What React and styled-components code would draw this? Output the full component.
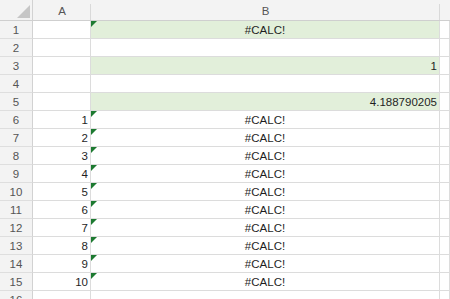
import React from "react";
import styled, { createGlobalStyle } from "styled-components";

const Global = createGlobalStyle`
  html, body {
    margin: 0;
    padding: 0;
    background: #ffffff;
    overflow: hidden;
  }
  body {
    font-family: "Liberation Sans", Arial, sans-serif;
  }
`;

const rows = [
  { b: "#CALC!", bAlign: "center", fill: true, flag: true },
  {},
  { b: "1", bAlign: "right", fill: true },
  {},
  { b: "4.188790205", bAlign: "right", fill: true },
  ...Array.from({ length: 10 }, (_, i) => ({
    a: String(i + 1),
    b: "#CALC!",
    bAlign: "center",
    flag: true,
  })),
  {},
];

const App = () => {
  return (
    <>
      <Global />
      <Sheet>
        <Corner />
        <ColHeader>A</ColHeader>
        <ColHeader>B</ColHeader>
        <ColHeader last />
        {rows.map((row, i) => (
          <React.Fragment key={i}>
            <RowHeader>{i + 1}</RowHeader>
            <Cell align="right">{row.a}</Cell>
            <Cell align={row.bAlign} fill={row.fill ? 1 : 0} flag={row.flag ? 1 : 0}>
              {row.b}
            </Cell>
            <Cell />
          </React.Fragment>
        ))}
      </Sheet>
    </>
  );
};

export default App;

const Sheet = styled.div`
  display: grid;
  grid-template-columns: 33px 58px 349px 1fr;
  grid-template-rows: 21px;
  grid-auto-rows: 18px;
  width: 450px;
  height: 299px;
  overflow: hidden;
`;

const Corner = styled.div`
  position: relative;
  background: #f3f3f3;
  border-right: 1px solid #d2d2d2;
  border-bottom: 1px solid #cfcfcf;
  &::after {
    content: "";
    position: absolute;
    right: 2px;
    bottom: 2px;
    width: 0;
    height: 0;
    border-left: 13px solid transparent;
    border-bottom: 13px solid #c6c6c6;
  }
`;

const ColHeader = styled.div`
  position: relative;
  background: #f3f3f3;
  border-bottom: 1px solid #cfcfcf;
  color: #555555;
  font-size: 11.5px;
  display: flex;
  align-items: center;
  justify-content: center;
  padding-top: 1px;
  &::after {
    content: "";
    display: ${(p) => (p.last ? "none" : "block")};
    position: absolute;
    right: 0;
    top: 4px;
    bottom: 0;
    width: 1px;
    background: #d9d9d9;
  }
`;

const RowHeader = styled.div`
  background: #f3f3f3;
  border-right: 1px solid #d2d2d2;
  border-bottom: 1px solid #dedede;
  color: #555555;
  font-size: 11.5px;
  display: flex;
  align-items: center;
  justify-content: center;
`;

const Cell = styled.div`
  position: relative;
  background: ${(p) => (p.fill ? "#e2efda" : "#ffffff")};
  border-right: 1px solid #dcdcdc;
  border-bottom: 1px solid #dcdcdc;
  color: #1f1f1f;
  font-size: 11.5px;
  display: flex;
  align-items: flex-end;
  justify-content: ${(p) =>
    p.align === "center" ? "center" : p.align === "right" ? "flex-end" : "flex-start"};
  padding: 0 2px 2px 2px;
  box-sizing: border-box;
  white-space: nowrap;
  &::before {
    content: "";
    display: ${(p) => (p.flag ? "block" : "none")};
    position: absolute;
    left: 0;
    top: 0;
    width: 0;
    height: 0;
    border-top: 6px solid #1d7a31;
    border-right: 6px solid transparent;
  }
`;
